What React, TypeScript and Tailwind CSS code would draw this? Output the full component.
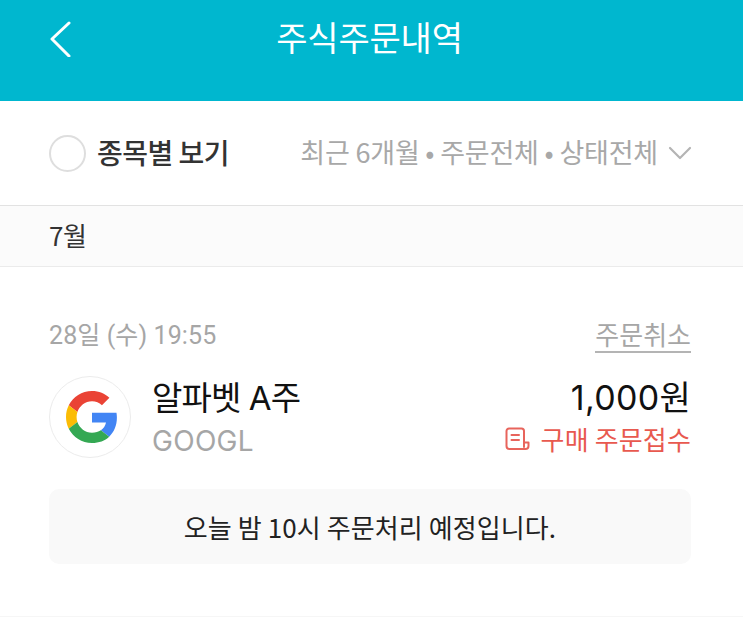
export default function App() {
  return (
    <div className="w-[743px] h-[622px] bg-white overflow-hidden flex flex-col font-['Noto_Sans_CJK_KR',sans-serif]">
      <header className="h-[101px] shrink-0 bg-[#00b7cf] flex px-[49px] pt-[21px] items-start">
        <svg width="22" height="36" viewBox="0 0 22 36" fill="none" stroke="#fff" strokeWidth="3" strokeLinecap="round" strokeLinejoin="round">
          <path d="M20 2 L3 18 L20 35" />
        </svg>
        <div className="flex-1 text-center text-white text-[34px] leading-[38px] tracking-[-0.2px] pr-[26px] mt-[-2px] -translate-y-[1px]">주식주문내역</div>
      </header>
      <div className="h-[105px] shrink-0 flex items-center justify-between pl-[49px] pr-[51px] border-b border-[#e2e2e2]">
        <div className="flex items-center gap-[11px]">
          <div className="w-[37px] h-[37px] rounded-full border-2 border-[#dedede]" />
          <span className="text-[28px] leading-[32px] text-[#333] font-medium tracking-[-0.5px] -translate-y-[1px]">종목별 보기</span>
        </div>
        <div className="flex items-center gap-[10px]">
          <span className="text-[27px] leading-[32px] text-[#a8a8a8] tracking-[-0.2px] -translate-y-[1px]">최근 6개월 • 주문전체 • 상태전체</span>
          <svg width="24" height="14" viewBox="0 0 24 14" fill="none" stroke="#b4b4b4" strokeWidth="2.2" strokeLinecap="round" strokeLinejoin="round">
            <path d="M2 2 L12 12 L22 2" />
          </svg>
        </div>
      </div>
      <div className="h-[61px] shrink-0 bg-[#fbfbfb] border-b border-[#ebebeb] flex items-center px-[49px]">
        <span className="text-[26px] leading-[30px] text-[#333] tracking-[-0.5px] -translate-y-[1px]">7월</span>
      </div>
      <div className="pr-[52px] pl-[49px] pt-[51px] flex-1 border-b border-[#f6f6f6] mb-[5px]">
        <div className="flex items-center justify-between h-[36px]">
          <span className="text-[25px] leading-[32px] text-[#a6a6a6] font-['Roboto','Noto_Sans_CJK_KR',sans-serif] tracking-[0.1px]">28일 (수) 19:55</span>
          <span className="text-[26px] leading-[32px] text-[#a6a6a6] border-b-2 border-[#b4b4b4] pb-[1px] -translate-y-[1px]">주문취소</span>
        </div>
        <div className="flex items-start justify-between mt-[22px]">
          <div className="flex items-center gap-[22px]">
            <div className="w-[82px] h-[82px] rounded-full border border-[#ececec] flex items-center justify-center pl-[3px]">
              <svg width="52" height="52" viewBox="0 0 48 48">
                <path fill="#EA4335" d="M24 9.5c3.54 0 6.71 1.22 9.21 3.6l6.85-6.85C35.9 2.38 30.47 0 24 0 14.62 0 6.51 5.38 2.56 13.22l7.98 6.19C12.43 13.72 17.74 9.5 24 9.5z" />
                <path fill="#4285F4" d="M46.98 24.55c0-1.57-.15-3.09-.38-4.55H24v9.02h12.94c-.58 2.96-2.26 5.48-4.78 7.18l7.73 6c4.51-4.18 7.09-10.36 7.09-17.65z" />
                <path fill="#FBBC05" d="M10.53 28.59c-.48-1.45-.76-2.99-.76-4.59s.27-3.14.76-4.59l-7.98-6.19C.92 16.46 0 20.12 0 24c0 3.88.92 7.54 2.56 10.78l7.97-6.19z" />
                <path fill="#34A853" d="M24 48c6.48 0 11.93-2.13 15.89-5.81l-7.73-6c-2.15 1.45-4.92 2.3-8.16 2.3-6.26 0-11.57-4.22-13.47-9.91l-7.98 6.19C6.51 42.62 14.62 48 24 48z" />
              </svg>
            </div>
            <div className="flex flex-col translate-y-[1px] -ml-[1px]">
              <span className="text-[33px] leading-[38px] text-[#111] tracking-[-0.9px] font-['Inter','Noto_Sans_CJK_KR',sans-serif]">알파벳 A주</span>
              <span className="text-[28px] leading-[32px] text-[#a6a6a6] mt-[8px] font-['Inter',sans-serif] tracking-[0.3px]">GOOGL</span>
            </div>
          </div>
          <div className="flex flex-col items-end pt-[3px]">
            <span className="text-[34px] leading-[38px] text-[#111] tracking-[0.3px] font-['Inter','Noto_Sans_CJK_KR',sans-serif]">1,000원</span>
            <div className="flex items-center gap-[11px] mt-[6px]">
              <svg width="25" height="25" viewBox="0 0 25 25" fill="none" stroke="#e8645c" strokeWidth="2" strokeLinecap="round" strokeLinejoin="round">
                <path d="M19 20 V4 a2.5 2.5 0 0 0 -2.5 -2.5 H4 a2.5 2.5 0 0 0 -2.5 2.5 V19 a3 3 0 0 0 3 3 H20.5 a3 3 0 0 0 3 -3 V15.5 H19" />
                <path d="M6.5 8 H14 M6.5 13 H14" />
              </svg>
              <span className="text-[26px] leading-[32px] text-[#e8594f] tracking-[0.15px]">구매 주문접수</span>
            </div>
          </div>
        </div>
        <div className="mt-[31px] h-[75px] rounded-[10px] bg-[#f9f9f9] flex items-center justify-center text-[26px] leading-[32px] text-[#222] tracking-[0.1px]">
          오늘 밤 10시 주문처리 예정입니다.
        </div>
      </div>
    </div>
  );
}
